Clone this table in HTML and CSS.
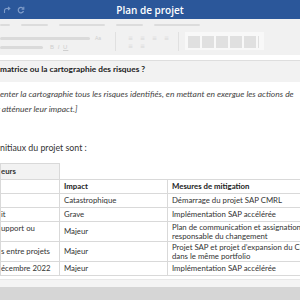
FILE: index.html
```html
<!DOCTYPE html>
<html lang="fr">
<head>
<meta charset="utf-8">
<title>Plan de projet</title>
<link rel="stylesheet" href="styles.css">
</head>
<body>
<div class="app">
  <header class="titlebar">
    <div class="qa">
      <svg class="qa-icon" viewBox="0 0 8 8" width="8" height="8"><path d="M1.5 7V4.5a2 2 0 0 1 2-2H6.5" fill="none" stroke="currentColor" stroke-width="1.1"/><path d="M5 1l1.8 1.5L5 4" fill="none" stroke="currentColor" stroke-width="1.1"/></svg>
      <svg class="qa-icon" viewBox="0 0 8 8" width="8" height="8"><path d="M6.2 2.6A2.7 2.7 0 1 0 6.5 5" fill="none" stroke="currentColor" stroke-width="1.2"/><path d="M6.8 0.8v2.3H4.6" fill="none" stroke="currentColor" stroke-width="1.1"/></svg>
    </div>
    <div class="title">Plan de projet</div>
    <div></div>
  </header>

  <nav class="ribbon">
    <div class="tabs">
      <span class="tab t1"></span><span class="tab t2"></span><span class="tab t3"></span><span class="tab t2"></span><span class="tab t3"></span>
    </div>
    <div class="tools">
      <div class="grp font">
        <div class="frow"><span class="bar b-long"></span><span class="mini">Aa</span></div>
        <div class="frow"><span class="bar b-short"></span><span class="mini biu">B <i>I</i> <u>U</u></span></div>
      </div>
      <span class="divider"></span>
      <div class="grp para">
        <div class="prow"><span class="pic">≡</span><span class="pic">≡</span><span class="pic">≡</span><span class="pic">≡</span></div>
        <div class="prow"><span class="pic">≡</span><span class="pic">≡</span></div>
      </div>
      <span class="divider"></span>
      <div class="styles">
        <span class="sbox"></span><span class="sbox"></span><span class="sbox"></span><span class="sbox"></span><span class="sbox"></span><span class="sedge"></span>
      </div>
    </div>
  </nav>

  <main class="doc">
    <div class="qhead">matrice ou la cartographie des risques ?</div>
    <p class="hint">enter la cartographie tous les risques identifiés, en mettant en exergue les actions de<br><span class="cut">r</span> atténuer leur impact.]</p>
    <p class="lead">nitiaux du projet sont :</p>
    <table class="risks">
      <tr class="thead0"><td class="gcell">eurs</td><td class="blank"></td><td class="blank"></td></tr>
      <tr class="r1 hdr"><td></td><td>Impact</td><td>Mesures de mitigation</td></tr>
      <tr class="r1"><td></td><td>Catastrophique</td><td>Démarrage du projet SAP CMRL</td></tr>
      <tr class="r1"><td>it</td><td>Grave</td><td>Implémentation SAP accélérée</td></tr>
      <tr class="r2"><td class="top">upport ou</td><td>Majeur</td><td>Plan de communication et assignation d<br>responsable du changement</td></tr>
      <tr class="r2"><td>s entre projets</td><td>Majeur</td><td>Projet SAP et projet d’expansion du CMRL<br>dans le même portfolio</td></tr>
      <tr class="r1"><td>écembre 2022</td><td>Majeur</td><td>Implémentation SAP accélérée</td></tr>
    </table>
  </main>
  <footer class="statusbar"></footer>
</div>
</body>
</html>
```
FILE: styles.css
```css
* { box-sizing: border-box; }
html, body { margin: 0; padding: 0; }
body { width: 300px; height: 300px; overflow: hidden; background: #fff; }
.app { width: 300px; height: 300px; display: flex; flex-direction: column; overflow: hidden; }

.titlebar {
  height: 19px; background: #2b579a; color: #fff; flex: none;
  display: grid; grid-template-columns: 1fr auto 1fr; align-items: center;
}
.qa { display: flex; gap: 6px; padding-left: 3px; color: #7f9cc9; }
.qa-icon { display: block; }
.title { font-family: "Open Sans", sans-serif; font-weight: 600; font-size: 10px; }

.ribbon { height: 36px; background: #f1f1f1; padding-top: 5px; flex: none; }
.tabs { display: flex; gap: 11px; height: 2px; }
.tab { height: 2px; background: #dcdcdc; border-radius: 1px; }
.t1 { width: 10px; }
.t2 { width: 27px; }
.t3 { width: 46px; }

.tools { display: flex; align-items: flex-start; margin-top: 6px; }
.grp.font { width: 109px; display: flex; flex-direction: column; gap: 5px; padding-top: 4px; }
.frow { display: flex; align-items: center; height: 4px; }
.bar { height: 3px; background: #dadada; border-radius: 2px; }
.b-long { width: 90px; }
.b-short { width: 43px; }
.mini { font-family: "Liberation Sans", sans-serif; font-size: 5px; color: #cfcfcf; margin-left: 5px; }
.mini.biu { margin-left: 7px; font-size: 6px; letter-spacing: 1px; }
.divider { width: 1px; height: 19px; background: #e0e0e0; margin: 0 6px; }
.grp.para { width: 50px; padding-left: 6px; display: flex; flex-direction: column; gap: 1px; padding-top: 2px; }
.prow { display: flex; gap: 6px; }
.pic { font-family: "DejaVu Sans", sans-serif; font-size: 6px; line-height: 7px; color: #d8d8d8; width: 6px; }
.styles { background: #f8f8f8; display: flex; gap: 2px; padding: 4px 3px 2px 3px; height: 18px; width: 79px; }
.sbox { width: 12px; height: 12px; background: #e0e0e0; }
.sedge { width: 1px; height: 12px; background: #e0e0e0; }

.doc { flex: 1; background: #fff; padding-top: 5px; font-family: Lato, "Liberation Sans", sans-serif; color: #333; font-size: 8.8px; border-bottom: 1px solid #e8e8e8; overflow: hidden; }
.qhead { height: 22px; background: #f2f2f2; border-top: 1px solid #dedede; font-weight: 700; font-size: 8.3px; padding-top: 3px; line-height: 10px; color: #222; white-space: nowrap; }
.hint { margin: 5px 0 0 0; font-style: italic; font-size: 8.5px; line-height: 15px; color: #444; white-space: nowrap; }
.cut { margin-left: -3px; }
.lead { margin: 26px 0 0 0; line-height: 10px; white-space: nowrap; }
.risks { border-collapse: collapse; margin-top: 10px; width: 340px; table-layout: fixed; line-height: 9px; font-size: 7.8px; }
.risks td { padding: 0 0 0 4px; border: 1px solid #d9d9d9; vertical-align: middle; white-space: nowrap; overflow: hidden; }
.risks td:first-child { width: 59px; padding-left: 0; }
.risks td:nth-child(2) { width: 108px; }
.thead0 { height: 16px; }
.thead0 .gcell { background: #f2f2f2; font-weight: 700; }
.thead0 .blank { border: none; }
.r1 { height: 14px; }
.r2 { height: 20px; }
.hdr td { font-weight: 700; color: #222; }
.risks td.top { vertical-align: top; padding-top: 2px; }

.statusbar { height: 13px; background: #d6d6d6; border-top: 7px solid #f4f4f4; flex: none; box-sizing: content-box; }
```
